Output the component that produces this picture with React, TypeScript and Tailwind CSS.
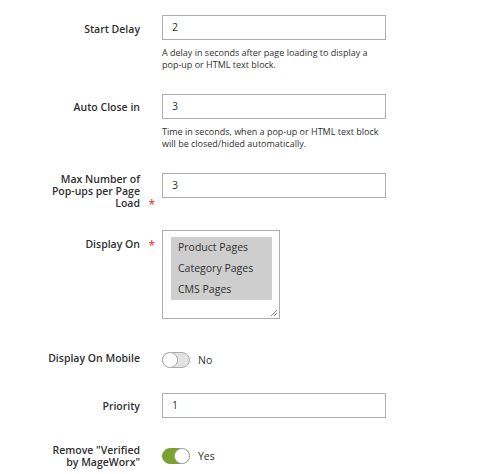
import React from "react";

type RowProps = {
  label: React.ReactNode;
  required?: boolean;
  labelClass?: string;
  rowClass?: string;
  children: React.ReactNode;
};

function Row({ label, required, labelClass = "", rowClass = "", children }: RowProps) {
  return (
    <div className={`flex ${rowClass}`}>
      <div
        className={`relative w-[140px] shrink-0 self-start text-right text-[10.5px] font-semibold leading-[12px] text-[#303030] ${labelClass}`}
      >
        {label}
        {required ? (
          <span className="absolute bottom-[-2px] right-[-15px] text-[12px] font-normal leading-[12px] text-[#e22626]">
            *
          </span>
        ) : null}
      </div>
      <div className="w-[22px] shrink-0" />
      <div className="w-[224px] shrink-0">{children}</div>
    </div>
  );
}

function TextInput({ value }: { value: string }) {
  return (
    <div className="flex h-[25px] w-[224px] items-center border border-[#adadad] bg-white pl-[9px] text-[10.5px] text-[#303030]">
      {value}
    </div>
  );
}

function Help({ children }: { children: React.ReactNode }) {
  return (
    <p className="mt-[7px] w-[224px] text-[9px] leading-[12px] text-[#303030]">{children}</p>
  );
}

function Toggle({ on, text }: { on: boolean; text: string }) {
  return (
    <div className="flex items-center gap-[8px]">
      <div
        className={`relative h-[16px] w-[28px] rounded-full border ${
          on ? "border-[#79a22e] bg-[#79a22e]" : "border-[#adadad] bg-[#e3e3e3]"
        }`}
      >
        <span
          className={`absolute top-[-1px] h-[16px] w-[16px] rounded-full border border-[#adadad] bg-white ${
            on ? "right-[-1px]" : "left-[-1px]"
          }`}
        />
      </div>
      <span className="text-[10.5px] leading-[12px] text-[#303030]">{text}</span>
    </div>
  );
}

export default function App() {
  const pages = ["Product Pages", "Category Pages", "CMS Pages"];
  return (
    <div className="h-[474px] w-[478px] overflow-hidden bg-white pt-[15px] font-['Open_Sans',sans-serif]">
      <Row label="Start Delay" labelClass="pt-[8px]">
        <TextInput value="2" />
        <Help>A delay in seconds after page loading to display a pop-up or HTML text block.</Help>
      </Row>

      <Row label="Auto Close in" labelClass="pt-[7px]" rowClass="mt-[23px]">
        <TextInput value="3" />
        <Help>Time in seconds, when a pop-up or HTML text block will be closed/hided automatically.</Help>
      </Row>

      <Row
        label={
          <>
            Max Number of
            <br />
            Pop-ups per Page
            <br />
            Load
          </>
        }
        required
        labelClass="pt-0 leading-[12.2px]"
        rowClass="mt-[23px]"
      >
        <TextInput value="3" />
      </Row>

      <Row label="Display On" required labelClass="pt-[8px]" rowClass="mt-[21px]">
        <div className="relative h-[89px] w-[118px] border border-[#adadad] bg-white pl-[8px] pt-[6px]">
          <div className="w-[101px] bg-[#cecece]">
            {pages.map((p) => (
              <div
                key={p}
                className="flex h-[21px] items-center pl-[7px] text-[10.5px] text-[#303030]"
              >
                {p}
              </div>
            ))}
          </div>
          <svg
            className="absolute bottom-[1px] right-[1px]"
            width="8"
            height="8"
            viewBox="0 0 8 8"
          >
            <path d="M1 7 L7 1 M4 7 L7 4" stroke="#8a8a8a" strokeWidth="1" />
          </svg>
        </div>
      </Row>

      <Row label="Display On Mobile" rowClass="mt-[33px] items-center">
        <Toggle on={false} text="No" />
      </Row>

      <Row label="Priority" labelClass="pt-[7px]" rowClass="mt-[25px]">
        <TextInput value="1" />
      </Row>

      <Row
        label={
          <>
            Remove "Verified
            <br />
            by MageWorx"
          </>
        }
        labelClass="leading-[11px] self-center"
        rowClass="mt-[26px] items-center"
      >
        <Toggle on text="Yes" />
      </Row>
    </div>
  );
}
